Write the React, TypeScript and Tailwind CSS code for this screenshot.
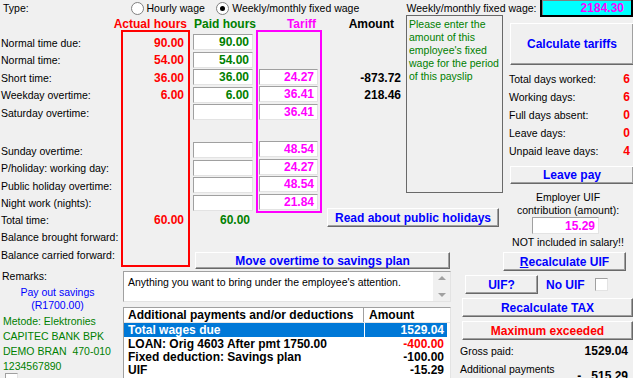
import React from "react";

const btn =
  "flex items-center justify-center bg-[#f0f0f0] border border-t-white border-l-white border-r-[#696969] border-b-[#696969] shadow-[inset_-1px_-1px_0_#a0a0a0] font-bold text-[12px] text-[#0000ff] whitespace-nowrap shrink-0";
const sunken =
  "bg-white border border-t-[#a0a0a0] border-l-[#a0a0a0] border-r-[#e3e3e3] border-b-[#e3e3e3] shrink-0";

type Row = {
  label: string;
  h: string;
  actual?: string;
  paid?: string | null; // null = empty input, undefined = nothing
  paidTotal?: string;
  amount?: string;
};

const rows: Row[] = [
  { label: "Normal time due:", h: "h-[17.5px]", actual: "90.00", paid: "90.00" },
  { label: "Normal time:", h: "h-[17.5px]", actual: "54.00", paid: "54.00" },
  { label: "Short time:", h: "h-[17.5px]", actual: "36.00", paid: "36.00", amount: "-873.72" },
  { label: "Weekday overtime:", h: "h-[17.5px]", actual: "6.00", paid: "6.00", amount: "218.46" },
  { label: "Saturday overtime:", h: "h-[17.5px]", paid: null },
  { label: "", h: "h-[20.5px]" },
  { label: "Sunday overtime:", h: "h-[17.5px]", paid: null },
  { label: "P/holiday: working day:", h: "h-[17.5px]", paid: null },
  { label: "Public holiday overtime:", h: "h-[17.5px]", paid: null },
  { label: "Night work (nights):", h: "h-[17.5px]", paid: null },
  { label: "Total time:", h: "h-[16px]", actual: "60.00", paidTotal: "60.00" },
  { label: "Balance brought forward:", h: "h-[18px]" },
  { label: "Balance carried forward:", h: "h-[18px]" },
];

const tariffs: (string | undefined)[] = [
  undefined,
  undefined,
  "24.27",
  "36.41",
  "36.41",
  undefined,
  "48.54",
  "24.27",
  "48.54",
  "21.84",
];

const Radio = ({ checked }: { checked?: boolean }) => (
  <span className="w-[13px] h-[13px] rounded-full border border-[#808080] bg-white flex items-center justify-center shrink-0">
    {checked && <span className="w-[5px] h-[5px] rounded-full bg-black" />}
  </span>
);

const App = () => {
  return (
    <div className="w-[633px] h-[378px] overflow-hidden bg-[#f0f0f0] text-[10.5px] leading-none text-black font-['Liberation_Sans',Arial,sans-serif]">
      {/* Type row */}
      <div className="flex h-[17px] items-center whitespace-nowrap">
        <span className="ml-[3px] w-[128px]">Type:</span>
        <Radio />
        <span className="ml-[3px] w-[70px]">Hourly wage</span>
        <Radio checked />
        <span className="ml-[3px] w-[175px]">Weekly/monthly fixed wage</span>
        <span className="w-[134px]">Weekly/monthly fixed wage:</span>
        <div className="self-start -mt-[2px] h-[19px] w-[93px] shrink-0 bg-[#00ffff] border-2 border-black shadow-[inset_1px_1px_0_#808080] flex items-center justify-end pr-[7px] font-bold text-[12px] text-[#ff00ff]">
          2184.30
        </div>
      </div>

      <div className="flex">
        {/* Labels column */}
        <div className="w-[121px] shrink-0 flex flex-col whitespace-nowrap">
          <div className="h-[17px]" />
          {rows.map((r, i) => (
            <div key={i} className={`${r.h} flex items-center pl-[1px]`}>
              {r.label}
            </div>
          ))}
          <div className="mt-[5px] h-[14px] flex items-center pl-[2px]">Remarks:</div>
          <div className="mt-[2.5px] w-[115px] text-center text-[#0000ff]">
            <div className="h-[13px] flex items-center justify-center">Pay out savings</div>
            <div className="h-[13px] flex items-center justify-center">(R1700.00)</div>
          </div>
          <div className="mt-[2px] pl-[3px] text-[#008000]">
            <div className="h-[15px] flex items-center">Metode: Elektronies</div>
            <div className="h-[15px] flex items-center">CAPITEC BANK BPK</div>
            <div className="h-[15px] flex items-center">DEMO BRAN&nbsp; 470-010</div>
            <div className="h-[15px] flex items-center">1234567890</div>
          </div>
          <div className="flex items-start pl-[5px] -mt-[1px]">
            <span className={`${sunken} w-[13px] h-[13px]`} />
            <span className="ml-[6px] mt-[5px]">Print tax calc on OK</span>
          </div>
        </div>

        {/* Main */}
        <div className="w-[512px] shrink-0 flex flex-col">
          {/* Upper */}
          <div className="flex h-[254px]">
            {/* Actual hours */}
            <div className="w-[69px] shrink-0 flex flex-col">
              <div className="h-[13px] flex items-center justify-end pr-[3px] whitespace-nowrap font-bold text-[12px] text-[#ff0000]">
                Actual hours
              </div>
              <div className="h-[237px] border-2 border-[#ff0000] pt-[2px] pr-[4px] flex flex-col">
                {rows.map((r, i) => (
                  <div
                    key={i}
                    className={`${r.h} flex items-center justify-end font-bold text-[12px] text-[#ff0000]`}
                  >
                    {r.actual}
                  </div>
                ))}
              </div>
            </div>

            <div className="w-[313px] shrink-0 flex flex-col">
              <div className="flex h-[235px]">
                {/* Paid hours */}
                <div className="w-[66px] shrink-0 flex flex-col">
                  <div className="h-[13px] flex items-center pl-[4px] whitespace-nowrap font-bold text-[12px] text-[#008000]">
                    Paid hours
                  </div>
                  <div className="mt-[4px] flex flex-col">
                    {rows.slice(0, 11).map((r, i) => (
                      <div key={i} className={`${r.h} flex items-start pl-[3px]`}>
                        {r.paid !== undefined && (
                          <div
                            className={`${sunken} w-[60px] h-[16px] flex items-center justify-end pr-[3px] font-bold text-[12px] text-[#008000]`}
                          >
                            {r.paid}
                          </div>
                        )}
                        {r.paidTotal && (
                          <div className="w-[60px] h-full flex items-center justify-end pr-[3px] font-bold text-[12px] text-[#008000]">
                            {r.paidTotal}
                          </div>
                        )}
                      </div>
                    ))}
                  </div>
                </div>

                {/* Tariff */}
                <div className="w-[66px] shrink-0 flex flex-col">
                  <div className="h-[13px] flex items-center justify-end pr-[6px] font-bold text-[12px] text-[#ff00ff]">
                    Tariff
                  </div>
                  <div className="h-[183px] border-2 border-[#ff00ff] pt-[2px] pl-[1px] flex flex-col">
                    {tariffs.map((t, i) => (
                      <div key={i} className={`${rows[i].h} flex items-start`}>
                        {t && (
                          <div
                            className={`${sunken} w-[59px] h-[16px] flex items-center justify-end pr-[3px] font-bold text-[12px] text-[#ff00ff]`}
                          >
                            {t}
                          </div>
                        )}
                      </div>
                    ))}
                  </div>
                </div>

                {/* Amount + note */}
                <div className="w-[181px] shrink-0 flex flex-col">
                  <div className="flex">
                    <div className="w-[84px] shrink-0 flex flex-col">
                      <div className="h-[13px] flex items-center justify-end pr-[12px] font-bold text-[12px]">
                        Amount
                      </div>
                      <div className="mt-[4px] flex flex-col">
                        {rows.slice(0, 4).map((r, i) => (
                          <div
                            key={i}
                            className={`${r.h} flex items-center justify-end pr-[5px] font-bold text-[12px]`}
                          >
                            {r.amount}
                          </div>
                        ))}
                      </div>
                    </div>
                    <div className="w-[97px] h-[178px] -mt-[2px] shrink-0 border border-[#696969] pl-[2px] pt-[2px] text-[#008000] leading-[13px] whitespace-nowrap">
                      <div>Please enter the</div>
                      <div>amount of this</div>
                      <div>employee's fixed</div>
                      <div>wage for the period</div>
                      <div>of this payslip</div>
                    </div>
                  </div>
                  <div className={`${btn} mt-[15px] ml-[5px] w-[172px] h-[19px]`}>
                    Read about public holidays
                  </div>
                </div>
              </div>
              <div className={`${btn} ml-[5px] w-[255px] h-[17px]`}>Move overtime to savings plan</div>
            </div>

            {/* Right upper */}
            <div className="w-[131px] shrink-0 flex flex-col whitespace-nowrap">
              <div className={`${btn} mt-[6px] ml-[7px] w-[124px] h-[42px]`}>Calculate tariffs</div>
              <div className="mt-[5px] ml-[6px] pr-[4px] flex flex-col">
                {[
                  ["Total days worked:", "6"],
                  ["Working days:", "6"],
                  ["Full days absent:", "0"],
                  ["Leave days:", "0"],
                  ["Unpaid leave days:", "4"],
                ].map(([l, v]) => (
                  <div key={l} className="h-[18px] flex items-center justify-between">
                    <span>{l}</span>
                    <span className="font-bold text-[12px] text-[#ff0000]">{v}</span>
                  </div>
                ))}
              </div>
              <div className={`${btn} mt-[6px] ml-[7px] w-[124px] h-[18px]`}>Leave pay</div>
              <div className="mt-[7px] ml-[2px] w-[126px] text-center leading-[13px]">
                <div>Employer UIF</div>
                <div>contribution (amount):</div>
              </div>
              <div
                className={`${sunken} ml-[29px] w-[67px] h-[17px] flex items-center justify-end pr-[3px] font-bold text-[12px] text-[#ff00ff]`}
              >
                15.29
              </div>
              <div className="mt-[2px] ml-[2px] w-[126px] h-[13px] flex items-center justify-center">
                NOT included in salary!!
              </div>
              <div className={`${btn} mt-[3px] w-[123px] h-[19px]`}>
                <span className="underline">R</span>ecalculate UIF
              </div>
            </div>
          </div>

          {/* Lower */}
          <div className="flex">
            <div className="w-[330px] shrink-0 pl-[2px] flex flex-col">
              <div className={`${sunken} w-[328px] h-[31px] flex`}>
                <div className="flex-1 pl-[4px] pt-[5px] whitespace-nowrap overflow-hidden">
                  Anything you want to bring under the employee's attention.
                </div>
                <div className="w-[17px] flex flex-col items-center justify-between py-[4px] bg-[#f0f0f0]">
                  <span className="w-0 h-0 border-l-[4px] border-r-[4px] border-b-[4px] border-l-transparent border-r-transparent border-b-[#a0a0a0]" />
                  <span className="w-0 h-0 border-l-[4px] border-r-[4px] border-t-[4px] border-l-transparent border-r-transparent border-t-[#a0a0a0]" />
                </div>
              </div>
              <div className={`${sunken} mt-[5px] w-[328px] h-[80px] overflow-hidden font-bold text-[12px] whitespace-nowrap`}>
                <div className="flex h-[15px] bg-white border-b border-[#e5e5e5]">
                  <div className="w-[240px] pl-[4px] flex items-center border-r border-[#a0a0a0]">
                    Additional payments and/or deductions
                  </div>
                  <div className="pl-[5px] flex items-center">Amount</div>
                </div>
                <div className="flex h-[14px] text-white">
                  <div className="w-[240px] bg-[#0078d7] pl-[4px] flex items-center">Total wages due</div>
                  <div className="ml-[1px] w-[82px] bg-[#0078d7] pr-[3px] flex items-center justify-end">
                    1529.04
                  </div>
                </div>
                {[
                  ["LOAN: Orig 4603 After pmt 1750.00", "-400.00", "text-[#ff0000]"],
                  ["Fixed deduction: Savings plan", "-100.00", "text-black"],
                  ["UIF", "-15.29", "text-black"],
                ].map(([n, a, c]) => (
                  <div key={n} className="flex h-[13px]">
                    <div className="w-[240px] pl-[4px] flex items-center">{n}</div>
                    <div className={`ml-[1px] w-[82px] pr-[3px] flex items-center justify-end ${c}`}>{a}</div>
                  </div>
                ))}
              </div>
            </div>

            <div className="w-[182px] shrink-0 flex flex-col whitespace-nowrap">
              <div className="mt-[4px] h-[19px] flex items-center">
                <div className={`${btn} ml-[14px] w-[73px] h-full`}>UIF?</div>
                <span className="ml-[8px] w-[49px] font-bold text-[12px] text-[#0000ff]">No UIF</span>
                <span className={`${sunken} w-[13px] h-[13px]`} />
              </div>
              <div className={`${btn} mt-[4px] ml-[11px] w-[171px] h-[19px]`}>Recalculate TAX</div>
              <div className={`${btn} mt-[4px] ml-[11px] w-[171px] h-[19px] text-[#ff0000]`}>
                Maximum exceeded
              </div>
              <div className="mt-[3px] ml-[9px] pr-[5px] h-[16px] flex items-center justify-between">
                <span>Gross paid:</span>
                <span className="font-bold text-[12px]">1529.04</span>
              </div>
              <div className="mt-[3px] ml-[9px] pr-[5px] flex items-start justify-between">
                <span className="h-[14px] flex items-center">Additional payments</span>
                <span className="mt-[8px] font-bold text-[12px]">
                  -<span className="ml-[10px]">515.29</span>
                </span>
              </div>
            </div>
          </div>
        </div>
      </div>
    </div>
  );
};

export default App;
